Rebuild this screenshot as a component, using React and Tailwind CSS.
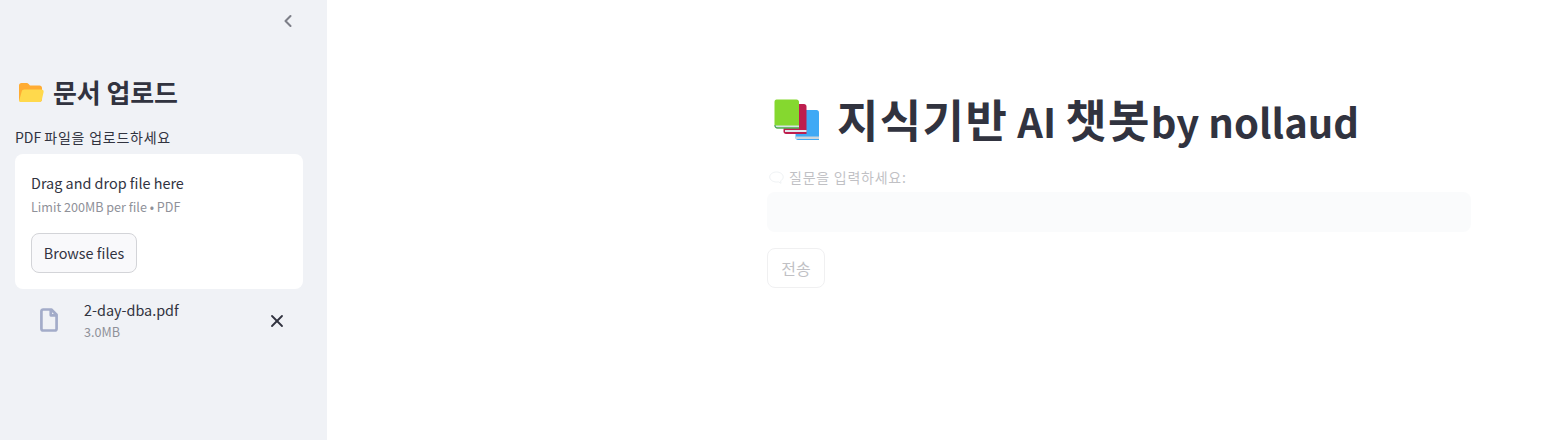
import React from 'react'
import { ChevronLeft, X } from 'lucide-react'

const font = '[font-family:"Noto_Sans_CJK_KR","Noto_Sans",sans-serif]'

const FolderIcon = () => (
    <svg width="26" height="24" viewBox="0 0 26 24" className="shrink-0">
        <path d="M1 5.500C1 4 2 3 3.500 3h5.200c.8 0 1.400.3 1.900.9L12 5.500h9.500C23 5.500 24 6.500 24 8v11.500c0 1.400-1 2.500-2.500 2.500h-18C2 22 1 21 1 19.500z" fill="#ffac33" />
        <path d="M6.200 9.500h17.300c1.500 0 2.400 1.200 2.100 2.600l-1.800 7.800c-.3 1.300-1.400 2.100-2.700 2.100H2.600c-1 0-1.600-.8-1.300-1.800l2.400-8.800c.4-1.200 1.300-1.900 2.500-1.900z" fill="#ffd94c" />
    </svg>
)

const BooksIcon = () => (
    <svg width="46" height="42" viewBox="0 0 46 42" className="shrink-0">
        <path d="M22 11h20.500c1.400 0 2.500 1.100 2.500 2.500V41H24c-1.500 0-2.500-1-2.500-2.500z" fill="#3fa9f5" />
        <rect x="21.500" y="37.500" width="23.500" height="2.500" fill="#ccd6dd" />
        <path d="M10 5h20c1.400 0 2.500 1.100 2.500 2.500V35H12c-1.500 0-2.500-1-2.500-2.500z" fill="#be1e4e" />
        <rect x="11" y="31" width="21.500" height="2" fill="#e1e8ed" />
        <path d="M2.500 0.500h20c1.400 0 2.500 1.100 2.500 2.500V29.500H3c-1.500 0-2.500-1-2.500-2.500V3c0-1.400.8-2.500 2-2.500z" fill="#85d82f" />
        <rect x="1" y="26.500" width="24" height="1.800" fill="#d5e4e8" />
        <path d="M.5 26c0 2 1.200 3.500 2.800 3.500H25v-1H3.500C2 28.500 1.500 27.500 1.500 26z" fill="#3a9a6b" />
    </svg>
)

const App = () => {
    return (
        <div className={`flex h-[440px] w-[1567px] overflow-hidden bg-white text-[#31333f] ${font}`}>
            <aside className="flex w-[327px] shrink-0 flex-col bg-[#f0f2f6] pl-[15px] pr-6">
                <div className="flex h-[42px] items-center justify-end pr-[5px]">
                    <ChevronLeft size={20} strokeWidth={2.5} className="text-[#7d7f88]" />
                </div>
                <div className="mt-[34px] flex h-[32px] items-center gap-[9px] pl-[3px]">
                    <FolderIcon />
                    <h2 className="text-[26px] font-bold leading-[32px] tracking-[-0.1px]">문서 업로드</h2>
                </div>
                <p className="mt-[19px] text-[14px] leading-[20px]">PDF <span className="tracking-[0.75px]">파일을 업로드하세요</span></p>
                <div className="mt-[7px] flex h-[135px] flex-col items-start rounded-[8px] bg-white px-4 pt-[18px]">
                    <p className="text-[14.4px] leading-[22px]">Drag and drop file here</p>
                    <p className="mt-[3px] text-[12.6px] leading-[20px] text-[#8f9199]">Limit 200MB per file • PDF</p>
                    <button className="mt-[16px] h-[40px] w-[106px] rounded-[8px] border border-[#d3d4d8] bg-[#f9f9fb] text-[14.4px]">Browse files</button>
                </div>
                <div className="mt-[10px] flex items-center pl-[20px]">
                    <svg width="28" height="28" viewBox="0 0 24 24" fill="none" stroke="#a3acc9" strokeWidth="2.300" className="shrink-0">
                        <path d="M14 3H7a1.500 1.500 0 0 0-1.500 1.500v15A1.500 1.500 0 0 0 7 21h10a1.500 1.500 0 0 0 1.500-1.500V7.500z" strokeLinejoin="round" />
                        <path d="M13.500 3v5h5" strokeLinejoin="round" />
                    </svg>
                    <div className="ml-[21px] flex-1">
                        <p className="text-[14.4px] leading-[22px]">2-day-dba.pdf</p>
                        <p className="mt-[2px] text-[12.6px] leading-[18px] text-[#8f9199]">3.0MB</p>
                    </div>
                    <X size={20} strokeWidth={2.2} className="mr-[16px] mt-[2px]" />
                </div>
            </aside>
            <main className="ml-[440px] w-[704px] shrink-0">
                <div className="mt-[88px] flex h-[64px] items-center pl-[7px]">
                    <BooksIcon />
                    <h1 className="ml-[17px] whitespace-nowrap text-[40px] font-bold leading-[64px]"><span className="text-[45px] tracking-[1.4px]">지식기반</span> AI <span className="text-[45px] tracking-[1.4px]">챗봇</span>by nollaud</h1>
                </div>
                <div className="opacity-30">
                    <div className="mt-[15px] flex h-[20px] items-center gap-[5px] pl-[2px]">
                        <svg width="15" height="13" viewBox="0 0 15 13" fill="none" stroke="#ccd6dd" strokeWidth="1" className="shrink-0">
                            <path d="M7.500 1C3.800 1 .7 3.200.7 6s3.100 5 6.800 5c.6 0 1.200 0 1.800-.2l2.700 1.500-.4-2.400c1.600-.9 2.600-2.300 2.600-3.900C14.200 3.200 11.200 1 7.500 1z" />
                        </svg>
                        <label className="text-[14px] leading-[20px] tracking-[0.75px]">질문을 입력하세요:</label>
                    </div>
                    <div className="mt-[5px] h-[40px] rounded-[8px] bg-[#f0f2f6]" />
                    <button className="mt-[16px] h-[40px] w-[58px] rounded-[8px] border border-[#cfd0d4] bg-white text-[16px]">전송</button>
                </div>
            </main>
        </div>
    )
}

export default App
